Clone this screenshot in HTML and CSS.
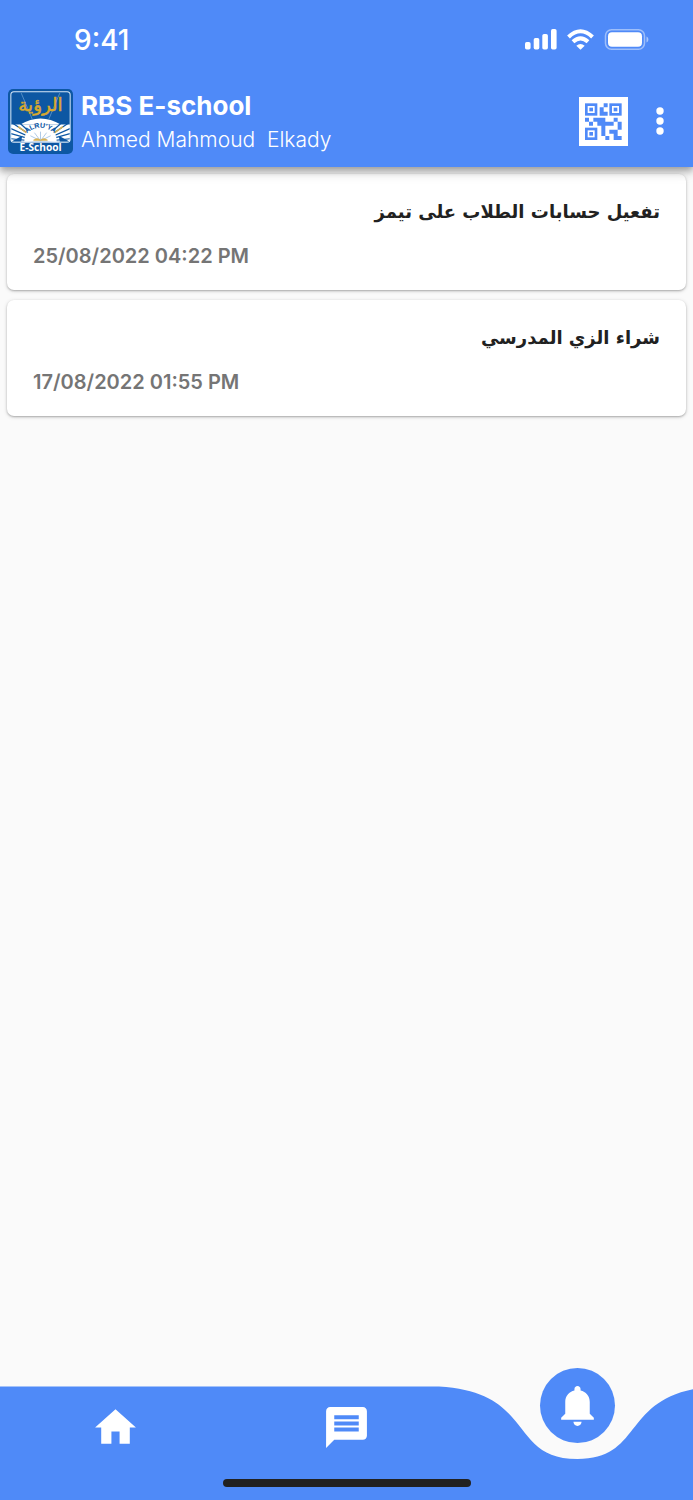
FILE: index.html
```html
<!DOCTYPE html>
<html lang="en">
<head>
<meta charset="utf-8">
<meta name="viewport" content="width=device-width, initial-scale=1">
<title>RBS E-school</title>
<link rel="stylesheet" href="styles.css">
</head>
<body>
<div class="app">
  <header class="header">
    <div class="status">
      <span class="clock">9:41</span>
      <svg class="status-icons" width="124" height="22" viewBox="0 0 124 22" fill="#fff" aria-hidden="true">
        <rect x="0" y="13" width="5.600" height="7.500" rx="1.700"/>
        <rect x="8.700" y="9" width="5.600" height="11.500" rx="1.700"/>
        <rect x="17.300" y="5" width="5.600" height="15.500" rx="1.700"/>
        <rect x="26" y="0" width="5.600" height="20.500" rx="1.700"/>
        <g fill="none" stroke="#fff" stroke-width="4">
          <path d="M43.500 8Q55.500 -3.500 67.500 8"/>
          <path d="M48 12.800Q55.500 5.800 63 12.800"/>
        </g>
        <path d="M51.300 16.800Q55.500 13.300 59.700 16.800L55.500 20.800Z"/>
        <rect x="80.500" y="0.800" width="39" height="19.500" rx="6" fill="none" stroke="#fff" stroke-opacity=".45" stroke-width="1.500"/>
        <rect x="83" y="3.300" width="34" height="14.500" rx="4"/>
        <path d="M121.500 7.500C124 8.500 124 12.500 121.500 13.500Z" opacity=".5"/>
      </svg>
    </div>
    <div class="toolbar">
      <svg class="logo" viewBox="0 0 64 64" role="img" aria-label="Al Ruya E-School">
        <rect width="64" height="64" rx="5" fill="#0d57a3"/>
        <path d="M3 35H61V52H3Z" fill="#fff"/>
        <path d="M12 35Q32 23 52 35Z" fill="#fff"/>
        <g stroke="#0d57a3" stroke-width="1.200">
          <path d="M32 52L3 49M32 52L3 44M32 52L3 39M32 52L5 34M32 52L12 34M32 52L52 34M32 52L59 34M32 52L61 39M32 52L61 44M32 52L61 49"/>
        </g>
        <path d="M3 52L14 46L13 52ZM61 52L50 46L51 52Z" fill="#0d57a3"/>
        <path d="M10 37L22 46M54 37L42 46" stroke="#d9b254" stroke-width="1.500"/>
        <path d="M16 52C16 29 48 29 48 52Z" fill="#fff"/>
        <path d="M32 51L22 46M32 51L26 43M32 51V42M32 51L38 43M32 51L42 46" stroke="#8fb5dc" stroke-width=".7"/>
        <path d="M25 50Q29 47 32 50Q35 47 39 50V51H25Z" fill="#d9b254"/>
        <path d="M13 4L24 30M51 4L40 30" stroke="#6ea2d2" stroke-width=".7"/>
        <rect x="2.800" y="2.800" width="58.400" height="49.700" rx="3" fill="none" stroke="#d7e8f7"/>
        <path id="arc" d="M15 47Q32 29 49 47" fill="none"/>
        <text class="logo-arc"><textPath href="#arc" startOffset="50%" text-anchor="middle">ALRU'YA</textPath></text>
        <text class="logo-ar" x="32" y="22" text-anchor="middle">الرؤية</text>
        <text class="logo-en" x="32" y="61" text-anchor="middle">E-School</text>
      </svg>
      <div class="titles">
        <h1 class="title">RBS E-school</h1>
        <p class="user">Ahmed Mahmoud&nbsp; Elkady</p>
      </div>
      <button class="icon-button" type="button" aria-label="QR code">
        <svg width="49" height="49" viewBox="0 0 147 147" aria-hidden="true">
          <rect width="147" height="147" fill="#fff"/>
          <defs>
            <g id="finder">
              <rect x="4" y="4" width="29" height="29" fill="none" stroke="#4f8af8" stroke-width="8"/>
              <rect x="13" y="13" width="11" height="11" fill="#4f8af8"/>
            </g>
          </defs>
          <use href="#finder" x="18" y="19"/>
          <use href="#finder" x="91" y="19"/>
          <use href="#finder" x="18" y="92"/>
          <path fill="#4f8af8" d="M74 19h12v12h-12zM62 31h12v13h12v12H62zM18 62h12v12H18zM30 74h12v12H30zM43 62h36v12h25v12H79v31H67V86H55V74H43zM104 62h12v12h-12zM116 74h12v24h-12zM91 98h25v19h12v12h-24v-19h-13zM79 117h12v12H79z"/>
        </svg>
      </button>
      <button class="icon-button more" type="button" aria-label="More options">
        <svg width="8" height="28" viewBox="0 0 8 28" fill="#fff" aria-hidden="true"><circle cx="4" cy="4" r="3.700"/><circle cx="4" cy="14" r="3.700"/><circle cx="4" cy="24" r="3.700"/></svg>
      </button>
    </div>
  </header>
  <main class="list">
    <article class="card">
      <h2 class="subject" lang="ar" dir="rtl">تفعيل حسابات الطلاب على تيمز</h2>
      <time class="date" datetime="2022-08-25T16:22">25/08/2022 04:22 PM</time>
    </article>
    <article class="card">
      <h2 class="subject" lang="ar" dir="rtl">شراء الزي المدرسي</h2>
      <time class="date" datetime="2022-08-17T13:55">17/08/2022 01:55 PM</time>
    </article>
  </main>
  <nav class="nav" aria-label="Main">
    <svg class="nav-shape" viewBox="0 0 693 114" preserveAspectRatio="none" aria-hidden="true">
      <path fill="#4f8af8" d="M0 0.500H439C536 6 508 73 577.500 73S619 6 716 0.500V114H0Z"/>
    </svg>
    <button class="tab" type="button" aria-label="Home">
      <svg width="49" height="49" viewBox="0 0 24 24" fill="#fff" aria-hidden="true"><path d="M10 20v-6h4v6h5v-8h3L12 3 2 12h3v8z"/></svg>
    </button>
    <button class="tab" type="button" aria-label="Messages">
      <svg width="49" height="49" viewBox="0 0 24 24" fill="#fff" aria-hidden="true"><path d="M20 2H4c-1.100 0-1.990.9-1.990 2L2 22l4-4h14c1.100 0 2-.9 2-2V4c0-1.100-.9-2-2-2zM6 9h12v2H6V9zm12 5H6v-2h12v2zm0-6H6V6h12v2z"/></svg>
    </button>
    <button class="tab active" type="button" aria-label="Notifications" aria-current="page">
      <svg width="49" height="49" viewBox="0 0 24 24" fill="#fff" aria-hidden="true"><path d="M10 20h4c0 1.100-.9 2-2 2s-2-.9-2-2zM18 16v-5.700c0-2.900-1.900-5-4.500-5.620V4c0-.83-.67-1.500-1.500-1.500s-1.500.67-1.500 1.500v.68C7.900 5.300 6 7.400 6 10.300V16l-2 2v1h16v-1z"/></svg>
    </button>
    <span class="home-indicator"></span>
  </nav>
</div>
</body>
</html>
```
FILE: styles.css
```css
* { box-sizing: border-box; }
body { margin: 0; background: #fafafa; font-family: Inter, "Liberation Sans", sans-serif; }
h1, h2, p { margin: 0; }
button { padding: 0; border: 0; background: none; cursor: pointer; }
svg { display: block; }

.app { display: flex; flex-direction: column; min-height: 100vh; }

.header {
  position: relative;
  z-index: 1;
  background: #4f8af8;
  color: #fff;
  box-shadow: 0 3px 6px rgba(0, 0, 0, .2), 0 6px 8px rgba(0, 0, 0, .14), 0 2px 16px rgba(0, 0, 0, .12);
}
.status { display: flex; justify-content: space-between; align-items: center; height: 77px; padding: 2px 44px 0 74px; }
.clock { font-size: 28px; font-weight: 500; }
.toolbar { display: flex; align-items: center; height: 90px; padding: 0 20px 2px 8px; }
.logo { width: 65px; height: 65px; }
.logo-ar { font: 18px "DejaVu Sans", sans-serif; fill: #d9a92e; stroke: #d9a92e; stroke-width: .5px; }
.logo-en { font: bold 10px "Open Sans", sans-serif; fill: #fff; }
.logo-arc { font: bold 7px "Liberation Sans", sans-serif; fill: #0d57a3; }
.titles { flex: 1; padding: 4px 0 0 8px; }
.title { font-size: 26px; line-height: 34px; font-weight: 700; }
.user { font-size: 21px; line-height: 34px; font-weight: 300; }
.icon-button { display: grid; place-items: center; }
.more { width: 26px; height: 49px; margin-left: 19px; }

.list { flex: 1; display: flex; flex-direction: column; gap: 10px; padding: 7px; }
.card {
  display: flex;
  flex-direction: column;
  gap: 12px;
  padding: 22px 26px 18px;
  background: #fff;
  border-radius: 7px;
  box-shadow: 0 1px 2px rgba(0, 0, 0, .24), 0 1px 4px rgba(0, 0, 0, .14);
}
.subject { font: bold 18px/32px "DejaVu Sans", sans-serif; color: #212121; }
.date { font-size: 20px; line-height: 32px; font-weight: 600; color: #757575; }

.nav { position: relative; display: grid; grid-template-columns: repeat(3, 1fr); height: 114px; }
.nav-shape { position: absolute; inset: 0; width: 100%; height: 100%; }
.tab { position: relative; display: grid; place-items: center; height: 82px; }
.active { width: 75px; height: 75px; justify-self: center; margin-top: -18px; border-radius: 50%; background: #4f8af8; }
.home-indicator { position: absolute; left: 50%; bottom: 13px; width: 248px; height: 8px; margin-left: -124px; border-radius: 4px; background: #212121; }
```
